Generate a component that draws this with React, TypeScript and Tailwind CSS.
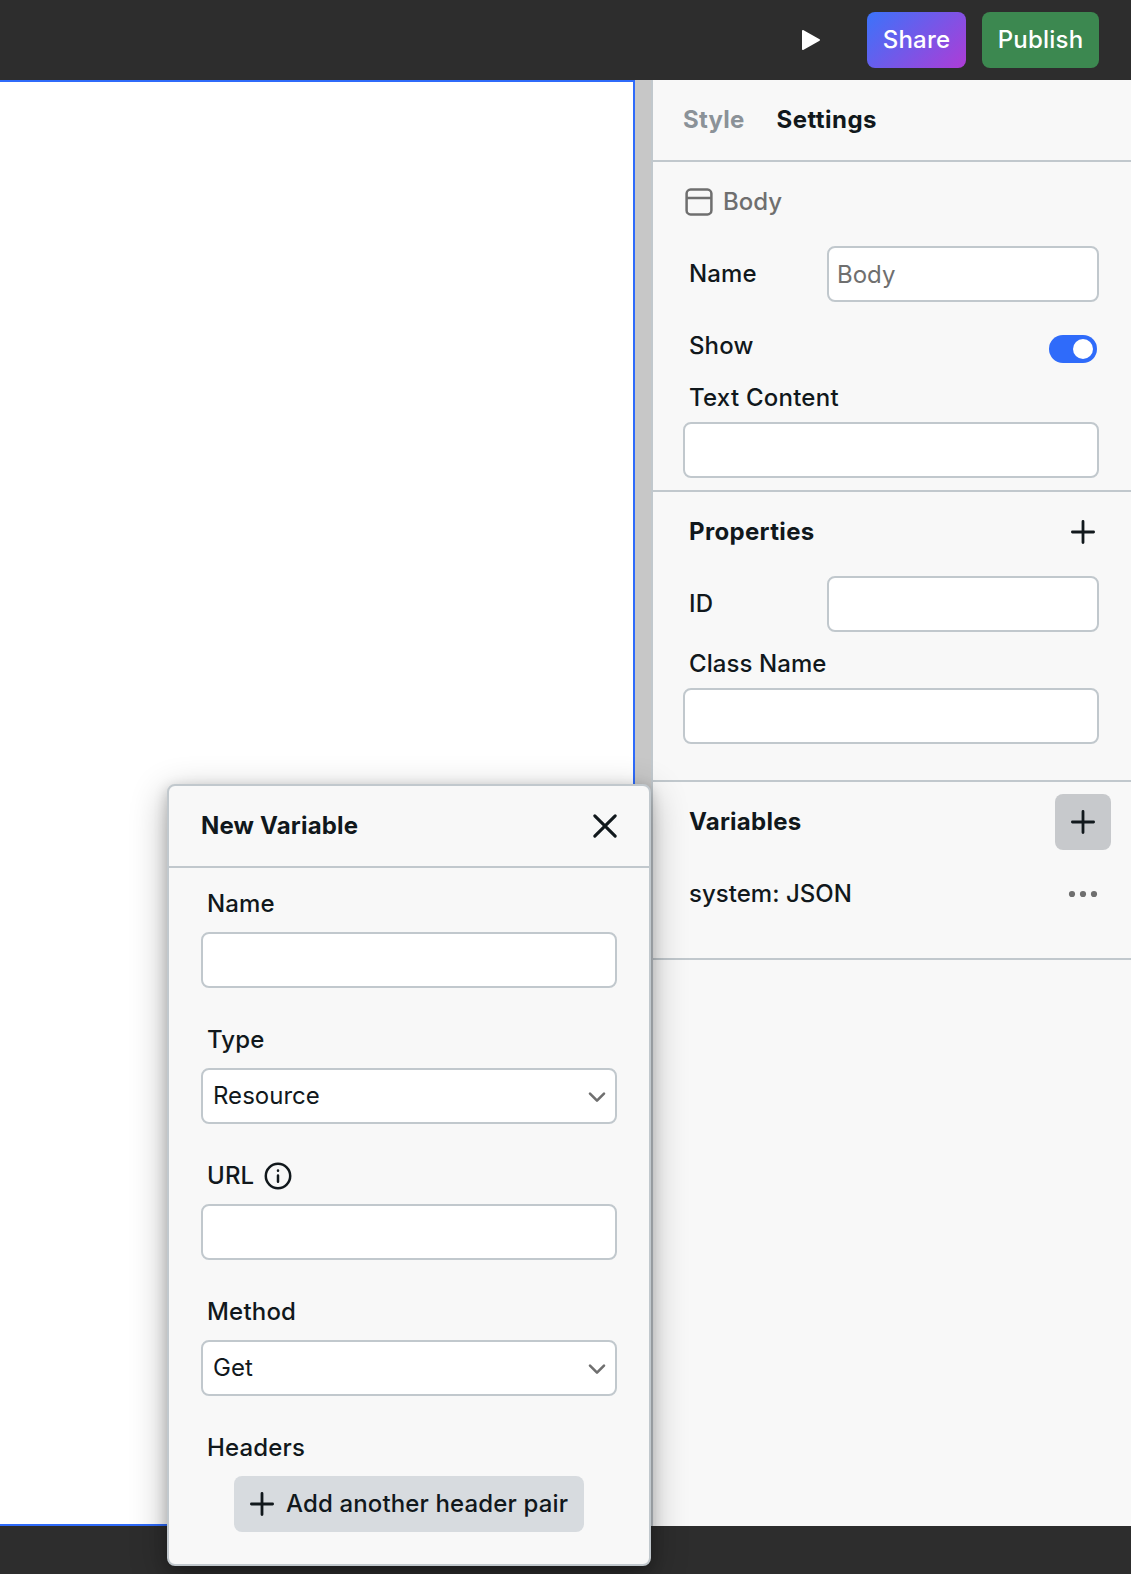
import type { ReactNode } from "react";

const field =
  "h-14 rounded-lg border-2 border-[#c1c8cd] bg-white text-[24px] outline-none";

function Label({ children, className = "" }: { children: ReactNode; className?: string }) {
  return (
    <div className={`flex h-6 items-center pl-1.5 text-[24px] leading-6 font-medium ${className}`}>
      {children}
    </div>
  );
}

function PlusIcon() {
  return (
    <svg className="shrink-0" width="32" height="32" viewBox="0 0 32 32" fill="none" stroke="currentColor" strokeWidth="2.8" strokeLinecap="round">
      <path d="M16 5.4v21.2M5.4 16h21.2" />
    </svg>
  );
}

function Select({ value }: { value: string }) {
  return (
    <button className={`${field} mt-4 flex w-full items-center justify-between pr-2 pl-2.5 text-left tracking-[0.02px]`}>
      <span>{value}</span>
      <svg width="20" height="20" viewBox="0 0 20 20" fill="none" stroke="#6f6f6f" strokeWidth="2.6" strokeLinecap="round" strokeLinejoin="round">
        <path d="M3 7.6l7 7 7-7" />
      </svg>
    </button>
  );
}

function TopBar() {
  return (
    <header className="flex h-20 shrink-0 items-center justify-end bg-[#2d2d2d] pr-8 text-[24px] font-medium tracking-[0.2px] text-white">
      <button className="mr-[46px]" aria-label="Preview">
        <svg width="20" height="22" viewBox="0 0 20 22" fill="white" stroke="white" strokeWidth="1.6" strokeLinejoin="round">
          <path d="M1.8 1.8v18.4L18.2 11z" />
        </svg>
      </button>
      <button className="mr-4 h-14 w-[99px] rounded-lg bg-[linear-gradient(135deg,#3b73fa_0%,#ae3cd6_100%)]">Share</button>
      <button className="h-14 w-[117px] rounded-lg bg-[#3c8850]">Publish</button>
    </header>
  );
}

function SettingsPanel() {
  return (
    <aside className="flex w-[480px] shrink-0 flex-col border-l-2 border-[#c1c8cd] bg-[#f8f8f8]">
      <div className="flex h-[82px] items-center gap-8 border-b-2 border-[#c1c8cd] pl-[30px] font-bold">
        <span className="text-[#8b9298]">Style</span>
        <span className="tracking-[0.45px]">Settings</span>
      </div>
      <section className="h-[330px] border-b-2 border-[#c1c8cd] pr-8 pl-[30px]">
        <div className="flex h-20 items-center gap-2 font-medium tracking-normal text-[#6f6f6f]">
          <svg width="32" height="32" viewBox="0 0 32 32" fill="none" stroke="currentColor" strokeWidth="2.5">
            <rect x="3.6" y="3.6" width="24.8" height="24.8" rx="4" />
            <path d="M3.6 12h24.8" />
          </svg>
          <span>Body</span>
        </div>
        <div className="mt-1 flex h-14 items-center justify-between">
          <Label className="tracking-[0.12px]">Name</Label>
          <input className={`${field} w-[272px] px-2 tracking-normal placeholder:text-[#6f6f6f]`} placeholder="Body" />
        </div>
        <div className="mt-8 flex h-7 items-center justify-between pr-0.5">
          <Label className="-mt-1 tracking-[0.12px]">Show</Label>
          <span className="mt-0.5 flex h-7 w-12 items-center justify-end rounded-full bg-[#2f6bfa] pr-1">
            <span className="size-5 rounded-full bg-white" />
          </span>
        </div>
        <Label className="mt-6 tracking-[0.24px]">Text Content</Label>
        <input className={`${field} mt-3 w-full px-2`} />
      </section>
      <section className="h-[290px] border-b-2 border-[#c1c8cd] pr-8 pl-[30px]">
        <div className="flex h-20 items-center justify-between pl-1.5 font-bold tracking-[0.34px]">
          <span>Properties</span>
          <PlusIcon />
        </div>
        <div className="mt-1 flex h-14 items-center justify-between">
          <Label className="tracking-[0.12px]">ID</Label>
          <input className={`${field} w-[272px] px-2`} />
        </div>
        <Label className="mt-5 tracking-[0.08px]">Class Name</Label>
        <input className={`${field} mt-3 w-full px-2`} />
      </section>
      <section className="h-[178px] border-b-2 border-[#c1c8cd] pr-5 pl-9">
        <div className="flex h-20 items-center justify-between font-bold">
          <span>Variables</span>
          <button className="flex size-14 items-center justify-center rounded-lg bg-[#c7c9cc]">
            <PlusIcon />
          </button>
        </div>
        <div className="flex h-16 items-center justify-between pr-3 font-medium">
          <span className="tracking-[0.03px]">system: JSON</span>
          <svg width="32" height="32" viewBox="0 0 32 32" fill="#6f6f6f">
            <circle cx="5" cy="16" r="3.1" />
            <circle cx="16" cy="16" r="3.1" />
            <circle cx="27" cy="16" r="3.1" />
          </svg>
        </div>
      </section>
    </aside>
  );
}

function NewVariableDialog() {
  return (
    <div className="absolute top-[784px] left-[167px] h-[782px] w-[484px] rounded-lg border-2 border-[#c1c8cd] bg-[#f8f8f8] shadow-[0_4px_14px_rgba(0,0,0,0.2),0_10px_36px_rgba(0,0,0,0.3)]">
      <div className="flex h-[82px] items-center justify-between border-b-2 border-[#c1c8cd] pr-7 pl-8 font-bold">
        <span className="tracking-[0.18px]">New Variable</span>
        <svg width="32" height="32" viewBox="0 0 32 32" fill="none" stroke="currentColor" strokeWidth="3.1" strokeLinecap="round">
          <path d="M5.8 5.8l20.4 20.4M26.2 5.8L5.8 26.2" />
        </svg>
      </div>
      <div className="px-8 pt-6 tracking-[0.14px]">
        <Label>Name</Label>
        <input className={`${field} mt-4 w-full px-2`} />
        <Label className="mt-10">Type</Label>
        <Select value="Resource" />
        <Label className="mt-10 gap-2">
          URL
          <svg width="32" height="32" viewBox="0 0 32 32" fill="none" stroke="currentColor" strokeWidth="2.5" strokeLinecap="round">
            <circle cx="16" cy="16" r="12.2" />
            <path d="M16 15.5v6.3M16 10.6v.1" />
          </svg>
        </Label>
        <input className={`${field} mt-4 w-full px-2`} />
        <Label className="mt-10 tracking-[0.2px]">Method</Label>
        <Select value="Get" />
        <Label className="mt-10">Headers</Label>
        <button className="mx-auto mt-4 flex h-14 w-[350px] items-center gap-2 rounded-lg bg-[#d7dbdf] pl-3 font-medium">
          <PlusIcon />
          <span>Add another header pair</span>
        </button>
      </div>
    </div>
  );
}

export default function App() {
  return (
    <div className="relative flex h-[1574px] w-[1131px] flex-col overflow-hidden bg-[#2d2d2d] font-['Inter',sans-serif] text-[24px] leading-8 tracking-[0.24px] text-[#11181c]">
      <TopBar />
      <main className="flex h-[1446px] shrink-0">
        <div className="w-[635px] border-y-2 border-r-2 border-[#2f6bfa] bg-white" />
        <div className="w-4 bg-[#c7c7c7]" />
        <SettingsPanel />
      </main>
      <NewVariableDialog />
    </div>
  );
}
